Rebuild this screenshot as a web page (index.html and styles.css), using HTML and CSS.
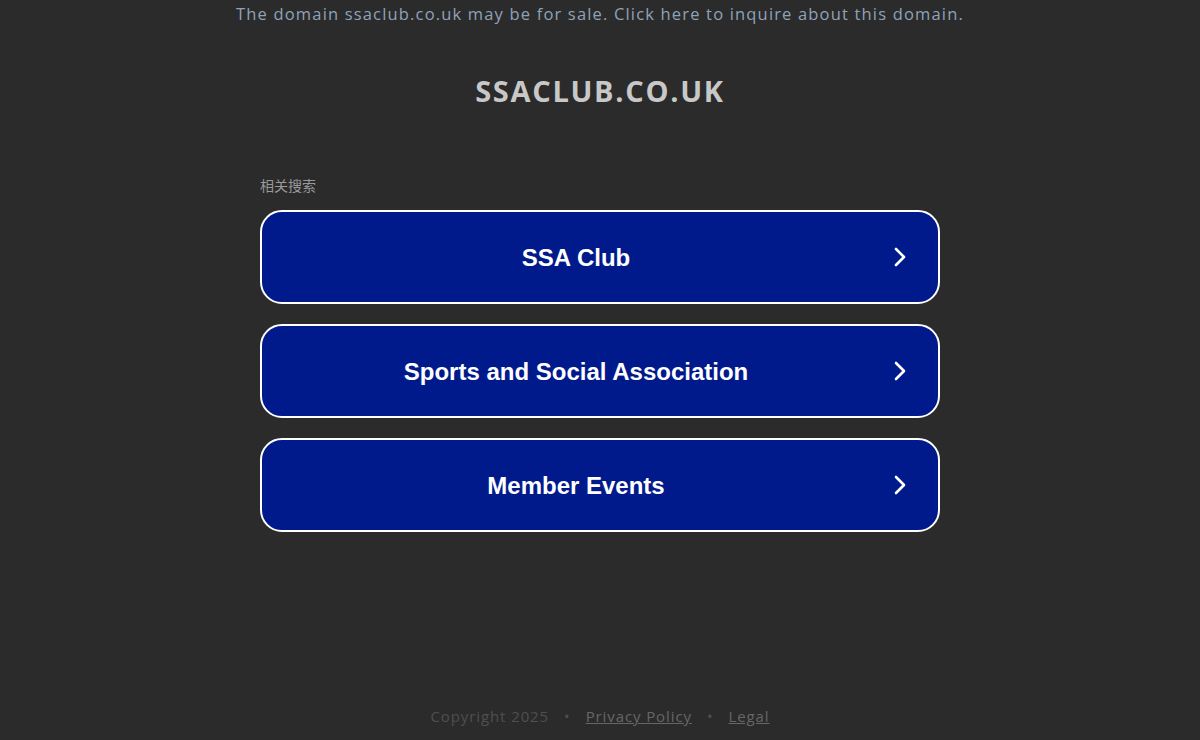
FILE: index.html
```html
<!DOCTYPE html>
<html>
<head>
<meta charset="utf-8">
<link rel="stylesheet" href="styles.css">
</head>
<body>
<div class="page">
  <div class="topbar"><a class="sale" href="#">The domain ssaclub.co.uk may be for sale. Click here to inquire about this domain.</a></div>
  <h1 class="domain">SSACLUB.CO.UK</h1>
  <div class="related">
    <div class="label">相关搜索</div>
    <a class="btn" href="#"><span class="btn-text">SSA Club</span><svg class="chev" viewBox="0 0 14 22" width="14" height="22"><path d="M3 3 L11 11 L3 19" fill="none" stroke="#fff" stroke-width="2.6" stroke-linecap="round" stroke-linejoin="round"/></svg></a>
    <a class="btn" href="#"><span class="btn-text">Sports and Social Association</span><svg class="chev" viewBox="0 0 14 22" width="14" height="22"><path d="M3 3 L11 11 L3 19" fill="none" stroke="#fff" stroke-width="2.6" stroke-linecap="round" stroke-linejoin="round"/></svg></a>
    <a class="btn" href="#"><span class="btn-text">Member Events</span><svg class="chev" viewBox="0 0 14 22" width="14" height="22"><path d="M3 3 L11 11 L3 19" fill="none" stroke="#fff" stroke-width="2.6" stroke-linecap="round" stroke-linejoin="round"/></svg></a>
  </div>
  <div class="spacer"></div>
  <div class="footer">
    <span class="copy">Copyright 2025</span><span class="dot">•</span><a href="#">Privacy Policy</a><span class="dot">•</span><a href="#">Legal</a>
  </div>
</div>
</body>
</html>
```
FILE: styles.css
```css
html, body {
  margin: 0;
  padding: 0;
  background: #2b2b2b;
  height: 100%;
}
.page {
  height: 740px;
  display: flex;
  flex-direction: column;
  align-items: center;
  font-family: "Open Sans", "Noto Sans", sans-serif;
}
.topbar {
  padding-top: 3px;
  height: 24px;
  line-height: 22px;
}
.sale {
  color: #8fa3b8;
  font-size: 16.5px;
  text-decoration: none;
  letter-spacing: 1.17px;
}
.domain {
  margin: 44px 0 0 0;
  font-size: 29px;
  line-height: 40px;
  font-weight: 700;
  color: #c8c8c8;
  letter-spacing: 1.7px;
}
.related {
  width: 680px;
  margin-top: 65px;
  display: flex;
  flex-direction: column;
}
.label {
  font-family: "Noto Sans CJK SC", sans-serif;
  font-size: 14px;
  color: #999;
  line-height: 18px;
  margin-bottom: 16px;
}
.btn {
  box-sizing: border-box;
  height: 94px;
  margin-bottom: 20px;
  background: #011a8b;
  border: 2px solid #fff;
  border-radius: 22px;
  display: flex;
  align-items: center;
  padding: 0 31px 0 0;
  text-decoration: none;
}
.btn-text {
  flex: 1;
  text-align: center;
  color: #fff;
  font-family: "Liberation Sans", Arial, sans-serif;
  font-weight: 700;
  font-size: 24px;
  padding-top: 2px;
}
.chev {
  display: block;
  margin-left: 3px;
}
.spacer {
  flex: 1;
}
.footer {
  font-size: 15px;
  color: #4f4f4f;
  padding-bottom: 14px;
  display: flex;
  letter-spacing: 0.9px;
}
.footer a {
  color: #666;
}
.dot {
  margin: 0 15px;
}
```
